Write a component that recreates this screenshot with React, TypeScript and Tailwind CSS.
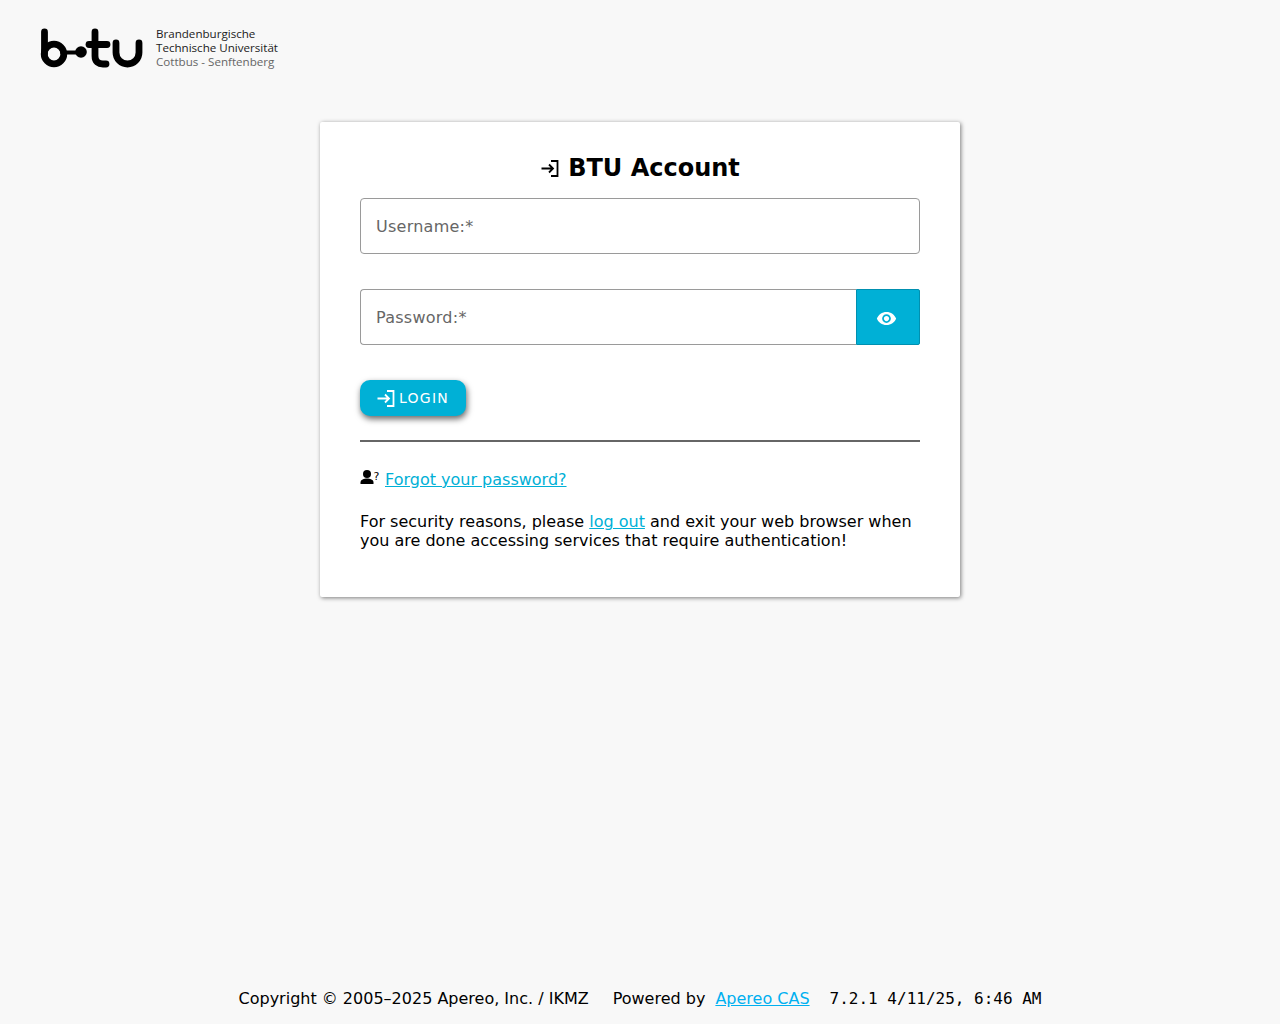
function Logo() {
  return (
    <div className="flex items-center gap-[14px]">
      <svg width="103" height="42" viewBox="0 0 103 42" fill="none" stroke="#000" strokeWidth="6.800" strokeLinecap="round" strokeLinejoin="round">
        <path d="M4.500 5V27" />
        <circle cx="14" cy="27" r="9.800" />
        <path d="M22 25.500H41" strokeWidth="4" />
        <circle cx="41" cy="25" r="5.800" fill="#000" stroke="none" />
        <path d="M55 5V29c0 6 3.500 8 8 8h3" />
        <path d="M49 17.500H67" />
        <path d="M76 16V25.500a11.500 11.500 0 0 0 23 0V16" />
      </svg>
      <div className="font-['Open_Sans',sans-serif] text-[11.600px] leading-[14.400px] font-medium text-[#222] mt-[0.500px] -ml-[1px]">
        <div>Brandenburgische</div>
        <div>Technische Universität</div>
        <div className="text-[#666] font-normal">Cottbus - Senftenberg</div>
      </div>
    </div>
  );
}

function LoginIcon() {
  return (
    <svg width="18" height="17" viewBox="0 0 18 17" fill="none" stroke="currentColor" strokeWidth="1.800">
      <path d="M10 1H16.500V16H10" />
      <path d="M0.500 8.500H12M8 4.500L12 8.500L8 12.500" />
    </svg>
  );
}

function PersonQuestion() {
  return (
    <svg width="21" height="16" viewBox="0 0 21 16" fill="#000" className="mb-[3px]">
      <circle cx="7" cy="4" r="4" />
      <path d="M0.500 14v-1.500C0.500 9.500 4 8.500 7 8.500s6.500 1 6.500 4V14z" />
      <text x="13.500" y="10" fontSize="11" fontFamily="'DejaVu Sans', sans-serif">?</text>
    </svg>
  );
}

export default function App() {
  return (
    <div className="min-h-screen flex flex-col bg-[#f8f8f8] text-black font-['DejaVu_Sans',sans-serif] text-[16px]">
      <header className="h-[122px] pl-[40px] pt-[26px] shrink-0">
        <Logo />
      </header>

      <main className="flex-1 flex justify-center items-start">
        <section className="w-[640px] h-[475px] bg-white rounded-[2px] px-[40px] pt-[31px] shadow-[1px_1px_4px_rgba(0,0,0,0.5)]">
          <h1 className="flex items-center justify-center gap-[9px] pl-[1px] text-[24px] font-bold leading-[30px] h-[30px]">
            <LoginIcon />
            BTU Account
          </h1>

          <input
            placeholder="Username:*"
            className="mt-[15px] block w-full h-[56px] border border-[#9a9a9a] rounded-[4px] px-[15px] bg-white outline-none tracking-[0.250px] placeholder:text-[#666]"
          />

          <div className="mt-[35px] flex h-[56px]">
            <input
              placeholder="Password:*"
              className="flex-1 min-w-0 border border-r-0 border-[#9a9a9a] rounded-l-[4px] px-[15px] pt-[2px] bg-white outline-none tracking-[0.250px] placeholder:text-[#666]"
            />
            <button className="w-[64px] flex items-center justify-center pr-[4px] pt-[2px] bg-[#00b0d6] border border-[#0090b0] rounded-r-[2px] text-white">
              <svg width="21" height="21" viewBox="0 0 24 24" fill="currentColor">
                <path d="M12 4.500C7 4.500 2.730 7.610 1 12c1.730 4.390 6 7.500 11 7.500s9.270-3.110 11-7.500c-1.730-4.390-6-7.500-11-7.500zM12 17c-2.760 0-5-2.240-5-5s2.240-5 5-5 5 2.240 5 5-2.240 5-5 5zm0-8c-1.660 0-3 1.340-3 3s1.340 3 3 3 3-1.340 3-3-1.340-3-3-3z" />
              </svg>
            </button>
          </div>

          <button className="mt-[35px] h-[36px] w-[106px] flex items-center justify-center gap-[4px] rounded-[10px] bg-[#00b0d6] text-white text-[14px] tracking-[1.250px] shadow-[1px_3px_6px_rgba(0,0,0,0.6)]">
            <LoginIcon />
            LOGIN
          </button>

          <hr className="mt-[24px] border-t-[2px] border-[#666]" />

          <p className="mt-[28px] flex items-center gap-[4px] leading-[19px]">
            <PersonQuestion />
            <a href="#" className="text-[#00b0d6] underline">Forgot your password?</a>
          </p>

          <p className="mt-[23px] leading-[19px]">
            For security reasons, please <a href="#" className="text-[#00b0d6] underline">log out</a> and exit your web browser when you are done accessing services that require authentication!
          </p>
        </section>
      </main>

      <footer className="h-[52px] shrink-0 flex justify-center items-start pt-[17px] leading-[19px]">
        <span>Copyright © 2005–2025 Apereo, Inc. / IKMZ</span>
        <span className="ml-[24px]">Powered by</span>
        <a href="#" className="ml-[10px] text-[#00b0f0] underline">Apereo CAS</a>
        <span className="ml-[20px] font-['DejaVu_Sans_Mono',monospace]">7.2.1 4/11/25, 6:46 AM</span>
      </footer>
    </div>
  );
}
